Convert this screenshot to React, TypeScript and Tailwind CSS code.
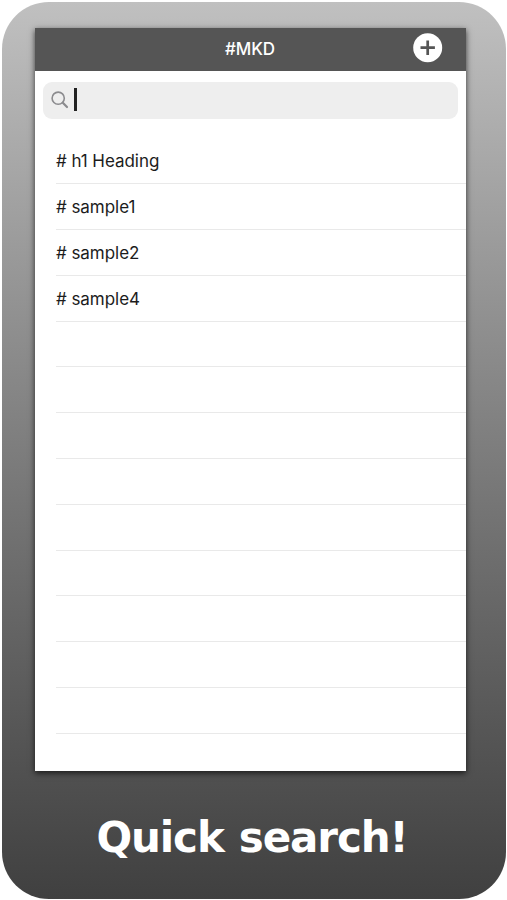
const NOTES = ["# h1 Heading", "# sample1", "# sample2", "# sample4"]
const ROW_COUNT = 13

function AddIcon() {
  return (
    <svg className="w-[30px] h-[30px]" viewBox="0 0 30 30" fill="none">
      <circle cx="14.7" cy="14.7" r="14.5" fill="#fff" />
      <path d="M14.7 7.5v14.4M7.5 14.7h14.4" stroke="#555" strokeWidth="2.7" />
    </svg>
  )
}

function SearchIcon() {
  return (
    <svg className="w-[18px] h-[18px] mb-px" viewBox="0 0 18 18" fill="none" stroke="#8b8b8e">
      <circle cx="7.2" cy="7.2" r="6.1" strokeWidth="1.6" />
      <path d="M11.8 11.8l4.2 4.2" strokeWidth="2.2" strokeLinecap="round" />
    </svg>
  )
}

export default function App() {
  return (
    <div className="w-[507px] h-[900px] bg-white pt-[2px] pl-[2px] overflow-hidden">
      <div className="w-[504px] h-[897px] rounded-[47px] bg-linear-to-b from-[#c0c0c0] to-[#404040] pt-[26px] pl-[33px]">
        {/* App screen */}
        <main className="w-[431px] h-[743px] flex flex-col bg-white overflow-hidden text-[17px] font-['Inter',sans-serif] shadow-[0_2px_6px_0_rgba(0,0,0,0.7)]">
          <header className="h-[42.5px] shrink-0 grid grid-cols-3 items-center bg-[#555] text-white">
            <h1 className="col-start-2 text-center font-medium leading-none tracking-[-0.1px] pr-px">#MKD</h1>
            <button className="justify-self-end mr-[23px] mb-[2px]" aria-label="Add">
              <AddIcon />
            </button>
          </header>

          {/* Search field */}
          <div className="mt-[11.5px] mx-[8px] h-[36.5px] shrink-0 flex items-center rounded-[9px] bg-[#eee] pl-[8px]">
            <SearchIcon />
            <div className="ml-[5px] mb-[2px] w-[2.5px] h-[23px] bg-[#222]" />
          </div>

          {/* Notes */}
          <ul className="mt-[19.7px] ml-[21px] text-[#1c1c1c]">
            {Array.from({ length: ROW_COUNT }, (_, i) => (
              <li key={i} className="h-[45.83px] flex items-center border-b border-[#e9e9e9] pt-[2px] leading-none tracking-[-0.05px]">
                {NOTES[i]}
              </li>
            ))}
          </ul>
        </main>

        <p className="w-[434px] mt-[42px] text-center text-white text-[42px] leading-[50px] font-bold tracking-[-1.1px] [word-spacing:1.5px] whitespace-nowrap font-['DejaVu_Sans',sans-serif]">
          Quick search!
        </p>
      </div>
    </div>
  )
}
